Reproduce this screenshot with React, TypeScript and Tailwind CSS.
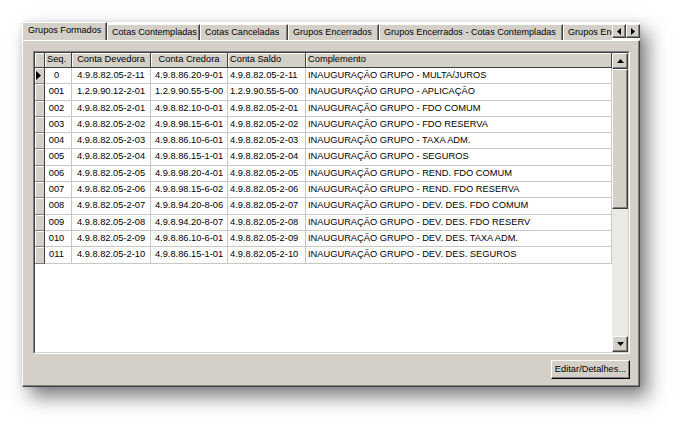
import React from "react";

const rows: string[][] = [
  ["0", "4.9.8.82.05-2-11", "4.9.8.86.20-9-01", "4.9.8.82.05-2-11", "INAUGURAÇÃO GRUPO - MULTA/JUROS"],
  ["001", "1.2.9.90.12-2-01", "1.2.9.90.55-5-00", "1.2.9.90.55-5-00", "INAUGURAÇÃO GRUPO - APLICAÇÃO"],
  ["002", "4.9.8.82.05-2-01", "4.9.8.82.10-0-01", "4.9.8.82.05-2-01", "INAUGURAÇÃO GRUPO - FDO COMUM"],
  ["003", "4.9.8.82.05-2-02", "4.9.8.98.15-6-01", "4.9.8.82.05-2-02", "INAUGURAÇÃO GRUPO - FDO RESERVA"],
  ["004", "4.9.8.82.05-2-03", "4.9.8.86.10-6-01", "4.9.8.82.05-2-03", "INAUGURAÇÃO GRUPO - TAXA ADM."],
  ["005", "4.9.8.82.05-2-04", "4.9.8.86.15-1-01", "4.9.8.82.05-2-04", "INAUGURAÇÃO GRUPO - SEGUROS"],
  ["006", "4.9.8.82.05-2-05", "4.9.8.98.20-4-01", "4.9.8.82.05-2-05", "INAUGURAÇÃO GRUPO - REND. FDO COMUM"],
  ["007", "4.9.8.82.05-2-06", "4.9.8.98.15-6-02", "4.9.8.82.05-2-06", "INAUGURAÇÃO GRUPO - REND. FDO RESERVA"],
  ["008", "4.9.8.82.05-2-07", "4.9.8.94.20-8-06", "4.9.8.82.05-2-07", "INAUGURAÇÃO GRUPO - DEV. DES. FDO COMUM"],
  ["009", "4.9.8.82.05-2-08", "4.9.8.94.20-8-07", "4.9.8.82.05-2-08", "INAUGURAÇÃO GRUPO - DEV. DES. FDO RESERV"],
  ["010", "4.9.8.82.05-2-09", "4.9.8.86.10-6-01", "4.9.8.82.05-2-09", "INAUGURAÇÃO GRUPO - DEV. DES. TAXA ADM."],
  ["011", "4.9.8.82.05-2-10", "4.9.8.86.15-1-01", "4.9.8.82.05-2-10", "INAUGURAÇÃO GRUPO - DEV. DES. SEGUROS"],
];

// width + alignment per column (header and cells share it)
const cols = [
  { title: "Seq.", w: "w-[27px]", cell: "justify-center pr-[3px]", head: "pl-[2px]" },
  { title: "Conta Devedora", w: "w-[79px]", cell: "justify-center", head: "justify-center" },
  { title: "Conta Credora", w: "w-[77px]", cell: "justify-center", head: "justify-center" },
  { title: "Conta Saldo", w: "w-[78px]", cell: "pl-[2px]", head: "pl-[2px]" },
  { title: "Complemento", w: "w-[306px]", cell: "pl-[2px]", head: "pl-[2px]" },
];

const tabs = [
  { label: "Cotas Contempladas", w: "w-[93px]" },
  { label: "Cotas Canceladas", w: "w-[88px]" },
  { label: "Grupos Encerrados", w: "w-[91px]" },
  { label: "Grupos Encerrados - Cotas Contempladas", w: "w-[184px]" },
  { label: "Grupos Encerrados", w: "w-[90px]" },
];

const raised =
  "bg-[#d4d0c8] border border-t-white border-l-white border-r-[#404040] border-b-[#404040] shadow-[inset_-1px_-1px_#808080]";

const Tri = ({ dir }: { dir: "up" | "down" | "left" | "right" }) => {
  const pts = {
    up: "0,4 3.5,0 7,4",
    down: "0,0 7,0 3.5,4",
    left: "4,0 4,7 0,3.5",
    right: "0,0 4,3.5 0,7",
  }[dir];
  const vb = dir === "up" || dir === "down" ? "0 0 7 4" : "0 0 4 7";
  const cls = dir === "up" || dir === "down" ? "w-[7px] h-[4px]" : "w-[4px] h-[7px]";
  return (
    <svg viewBox={vb} className={cls}>
      <polygon points={pts} fill="#000" />
    </svg>
  );
};

export default function App() {
  return (
    <div className="w-[684px] h-[430px] bg-white overflow-hidden font-['Liberation_Sans',Arial,sans-serif] text-[9.3px] text-black leading-none">
      <div className="pt-[22px] pl-[22px]">
        <div className="w-[618px] h-[365px] flex flex-col shadow-[8px_10px_18px_rgba(0,0,0,0.5),0_0_5px_rgba(0,0,0,0.12)]">
          {/* tab strip */}
          <div className="h-[18px] flex items-end text-[9.1px]">
            <div className="flex-1 flex items-end overflow-hidden h-full">
              <div className="relative z-10 -mb-[1px] h-[19px] w-[85px] shrink-0 flex items-center pl-[5px] pb-[2px] bg-[#d4d0c8] border-t border-l border-white border-r border-r-[#404040] shadow-[inset_-1px_0_#808080] whitespace-nowrap">
                Grupos Formados
              </div>
              {tabs.map((t, i) => (
                <div
                  key={i}
                  className={`${t.w} h-[16px] shrink-0 flex items-center pl-[4px] bg-[#d4d0c8] border-t border-l border-white border-r border-r-[#404040] shadow-[inset_-1px_0_#808080] whitespace-nowrap overflow-hidden`}
                >
                  {t.label}
                </div>
              ))}
            </div>
            <div className="self-start mt-[2px] flex">
              <div className={`${raised} w-[14px] h-[14px] flex items-center justify-center`}>
                <Tri dir="left" />
              </div>
              <div className={`${raised} w-[14px] h-[14px] flex items-center justify-center`}>
                <Tri dir="right" />
              </div>
            </div>
          </div>

          {/* tab panel */}
          <div className="flex-1 bg-[#d4d0c8] border border-t-white border-l-white border-r-[#404040] border-b-[#404040] shadow-[inset_-1px_-1px_#808080] pt-[10px] pl-[10px] pr-[8px] flex flex-col">
            <div className="w-[597px] h-[303px] border border-t-[#808080] border-l-[#808080] border-r-white border-b-white">
              <div className="h-full border border-t-[#404040] border-l-[#404040] border-r-[#d4d0c8] border-b-[#d4d0c8] bg-white flex">
                <div className="flex-1 flex flex-col">
                  {/* header */}
                  <div className="h-[15px] flex">
                    <div className="w-[10px] bg-[#d4d0c8] border-r border-b border-[#404040] shadow-[inset_1px_1px_#fff]" />
                    {cols.map((c) => (
                      <div
                        key={c.title}
                        className={`${c.w} ${c.head} flex items-center bg-[#d4d0c8] border-r border-b border-[#404040] shadow-[inset_1px_1px_#fff] whitespace-nowrap`}
                      >
                        {c.title}
                      </div>
                    ))}
                  </div>
                  {rows.map((r, ri) => (
                    <div key={ri} className="h-[16.3px] flex">
                      <div className="w-[10px] flex items-center pl-[1px] bg-[#d4d0c8] border-r border-b border-r-[#404040] border-b-[#808080] shadow-[inset_1px_1px_#fff]">
                        {ri === 0 && (
                          <svg viewBox="0 0 5 9" className="w-[5px] h-[9px]">
                            <polygon points="0,0 5,4.5 0,9" fill="#000" />
                          </svg>
                        )}
                      </div>
                      {r.map((v, ci) => (
                        <div
                          key={ci}
                          className={`${cols[ci].w} ${cols[ci].cell} flex items-center border-r border-b border-[#c8c8c8] whitespace-nowrap overflow-hidden`}
                        >
                          {v}
                        </div>
                      ))}
                    </div>
                  ))}
                </div>

                {/* vertical scrollbar */}
                <div className="w-[16px] flex flex-col bg-[#ebe9e5]">
                  <div className={`${raised} h-[16px] flex items-center justify-center`}>
                    <Tri dir="up" />
                  </div>
                  <div className={`${raised} h-[140px]`} />
                  <div className="flex-1" />
                  <div className={`${raised} h-[16px] flex items-center justify-center`}>
                    <Tri dir="down" />
                  </div>
                </div>
              </div>
            </div>

            <div className="flex justify-end pr-[1px] mt-[6px]">
              <button
                className={`${raised} w-[79px] h-[19px] flex items-center justify-center border-r-black border-b-black text-[9.3px]`}
              >
                Editar/Detalhes...
              </button>
            </div>
          </div>
        </div>
      </div>
    </div>
  );
}
